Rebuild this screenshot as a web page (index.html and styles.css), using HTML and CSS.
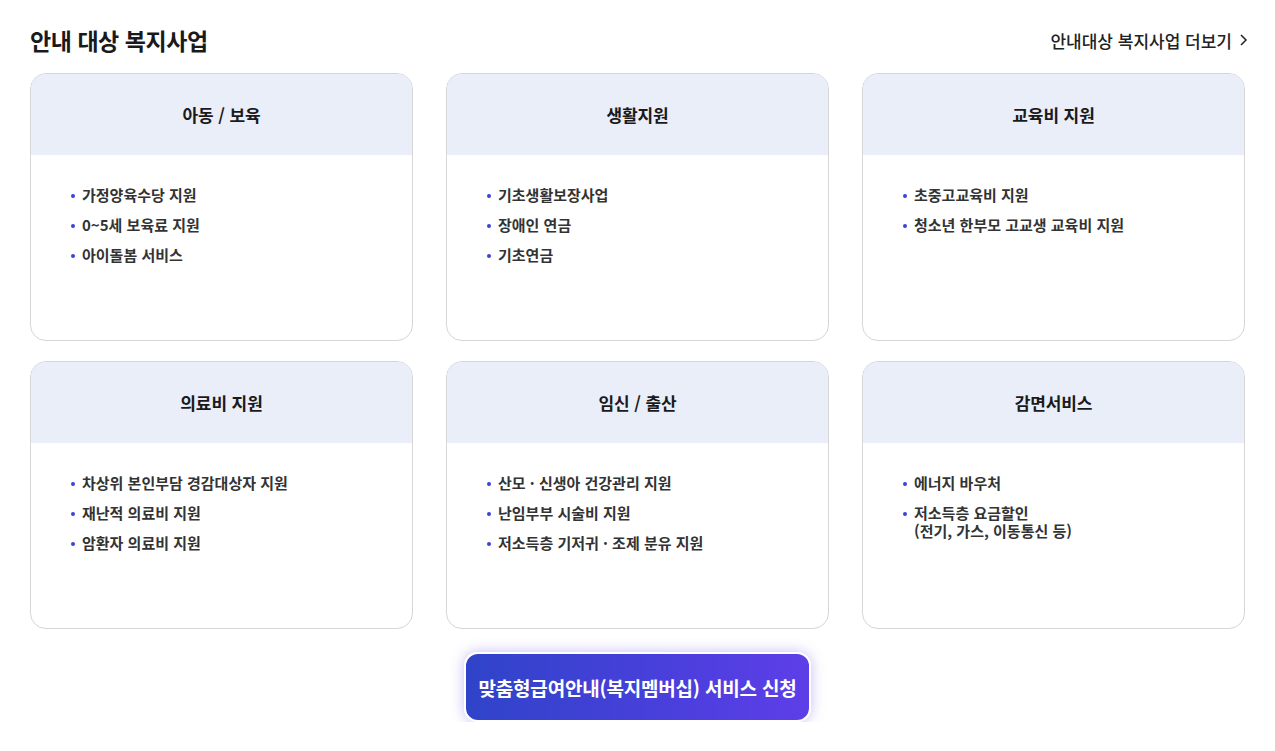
FILE: index.html
```html
<!DOCTYPE html>
<html lang="ko">
<head>
<meta charset="utf-8">
<link rel="stylesheet" href="styles.css">
</head>
<body>
<section class="welfare">
  <div class="head">
    <h2 class="title">안내 대상 복지사업</h2>
    <a class="more" href="#">안내대상 복지사업 더보기
      <svg width="9" height="14" viewBox="0 0 9 14"><path d="M2 2l5 5-5 5" fill="none" stroke="#222" stroke-width="1.5"/></svg>
    </a>
  </div>
  <div class="grid">
    <div class="card">
      <div class="card-head">아동 / 보육</div>
      <ul class="list">
        <li>가정양육수당 지원</li>
        <li>0~5세 보육료 지원</li>
        <li>아이돌봄 서비스</li>
      </ul>
    </div>
    <div class="card">
      <div class="card-head">생활지원</div>
      <ul class="list">
        <li>기초생활보장사업</li>
        <li>장애인 연금</li>
        <li>기초연금</li>
      </ul>
    </div>
    <div class="card">
      <div class="card-head">교육비 지원</div>
      <ul class="list">
        <li>초중고교육비 지원</li>
        <li>청소년 한부모 고교생 교육비 지원</li>
      </ul>
    </div>
    <div class="card">
      <div class="card-head">의료비 지원</div>
      <ul class="list">
        <li>차상위 본인부담 경감대상자 지원</li>
        <li>재난적 의료비 지원</li>
        <li>암환자 의료비 지원</li>
      </ul>
    </div>
    <div class="card">
      <div class="card-head">임신 / 출산</div>
      <ul class="list">
        <li>산모 · 신생아 건강관리 지원</li>
        <li>난임부부 시술비 지원</li>
        <li>저소득층 기저귀 · 조제 분유 지원</li>
      </ul>
    </div>
    <div class="card">
      <div class="card-head">감면서비스</div>
      <ul class="list">
        <li>에너지 바우처</li>
        <li>저소득층 요금할인<br>(전기, 가스, 이동통신 등)</li>
      </ul>
    </div>
  </div>
  <div class="cta-wrap">
    <a class="cta" href="#">맞춤형급여안내(복지멤버십) 서비스 신청</a>
  </div>
</section>
</body>
</html>
```
FILE: styles.css
```css
* { box-sizing: border-box; }
body {
  margin: 0;
  background: #fff;
  font-family: "Noto Sans CJK KR", "Noto Sans", sans-serif;
  color: #222;
}
.welfare {
  padding: 22px 30px 0;
  height: 722px;
  overflow: hidden;
}
.head {
  display: flex;
  justify-content: space-between;
  align-items: center;
  height: 36px;
  margin-bottom: 15px;
}
.title {
  margin: 0;
  font-size: 23px;
  font-weight: 700;
  letter-spacing: -0.45px;
  color: #1a1a1a;
}
.more {
  display: flex;
  align-items: center;
  gap: 7px;
  font-size: 17px;
  font-weight: 500;
  letter-spacing: 0;
  color: #222;
  text-decoration: none;
  margin-right: -3px;
}
.grid {
  display: grid;
  grid-template-columns: repeat(3, 383px);
  grid-auto-rows: 268px;
  column-gap: 33px;
  row-gap: 20px;
}
.card {
  border: 1px solid #d6d6d6;
  border-radius: 16px;
  overflow: hidden;
  background: #fff;
}
.card-head {
  height: 81px;
  background: #eaeef9;
  display: flex;
  align-items: center;
  justify-content: center;
  font-size: 17px;
  font-weight: 700;
  letter-spacing: -0.1px;
  color: #1a1a1a;
}
.list {
  list-style: none;
  margin: 0;
  padding: 31px 0 0 51px;
}
.list li {
  position: relative;
  font-size: 15px;
  line-height: 18px;
  font-weight: 700;
  letter-spacing: 0;
  color: #333;
  margin-bottom: 12px;
}
.list li::before {
  content: "";
  position: absolute;
  left: -11px;
  top: 8px;
  width: 4px;
  height: 4px;
  border-radius: 50%;
  background: #3646d4;
}
.cta-wrap {
  display: flex;
  justify-content: center;
  margin-top: 23px;
}
.cta {
  display: flex;
  align-items: center;
  justify-content: center;
  width: 347px;
  height: 70px;
  border: 2px solid #fff;
  border-radius: 14px;
  background: linear-gradient(90deg, #2f44c8 0%, #4a3fdc 60%, #5e3ee8 100%);
  box-shadow: 0 0 14px rgba(90, 70, 220, 0.35);
  color: #fff;
  font-size: 19px;
  font-weight: 700;
  letter-spacing: -0.2px;
  text-decoration: none;
}
```
